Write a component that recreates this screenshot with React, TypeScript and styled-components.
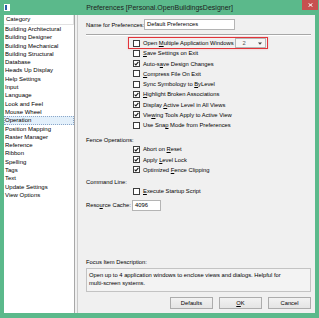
import styled, { createGlobalStyle } from "styled-components";
import { ReactNode } from "react";

const GlobalStyle = createGlobalStyle`
  html, body {
    margin: 0;
    padding: 0;
    background: #ffffff;
  }
  body {
    font-family: "Liberation Sans", Arial, sans-serif;
  }
`;

const Window = styled.div`
  width: 319px;
  height: 318px;
  background: #5bb98b;
  display: flex;
  flex-direction: column;
  overflow: hidden;
`;

const TitleBar = styled.div`
  height: 15px;
  flex: none;
  display: grid;
  grid-template-columns: 1fr auto 1fr;
  align-items: start;
`;

const AppIcon = styled.svg`
  margin: 4px 0 0 4px;
  justify-self: start;
`;

const Title = styled.div`
  font-size: 7px;
  line-height: 15px;
  color: #1e1e1e;
  white-space: nowrap;
`;

const CloseButton = styled.div`
  justify-self: end;
  width: 16px;
  height: 10px;
  margin-right: 1px;
  background: #c75050;
  display: flex;
  align-items: center;
  justify-content: center;
`;

const Frame = styled.div`
  flex: 1;
  margin: 0 4px 5px 4px;
  background: #f0f0f0;
  display: flex;
  min-height: 0;
`;

const CategoryList = styled.div`
  width: 71px;
  flex: none;
  box-sizing: border-box;
  background: #ffffff;
  border-right: 1px solid #a8a8a8;
  font-size: 6px;
  color: #000;
`;

const CategoryHeader = styled.div`
  height: 10px;
  box-sizing: border-box;
  line-height: 9px;
  padding-left: 2px;
  border-bottom: 1px solid #e2e2e2;
  border-right: 1px solid #e2e2e2;
`;

const CategoryItem = styled.div<{ $selected?: boolean }>`
  height: 8.3px;
  line-height: 8.3px;
  box-sizing: border-box;
  padding-left: ${(p) => (p.$selected ? "0" : "1px")};
  white-space: nowrap;
  background: ${(p) => (p.$selected ? "#e3f0fb" : "transparent")};
  border: ${(p) => (p.$selected ? "1px dotted #8aa6c8" : "none")};
  line-height: ${(p) => (p.$selected ? "6.3px" : "8.3px")};
`;

const Splitter = styled.div`
  width: 5px;
  flex: none;
  background: linear-gradient(
    to right,
    transparent 0,
    transparent 2.5px,
    #c9c9c9 2.5px,
    #c9c9c9 3.5px,
    transparent 3.5px
  );
`;

const Content = styled.div`
  flex: 1;
  display: flex;
  flex-direction: column;
  padding: 4px 4px 4px 6px;
  font-size: 5.8px;
  color: #000;
  min-width: 0;
`;

const FieldRow = styled.div`
  display: flex;
  align-items: center;
  height: 11px;
  flex: none;
`;

const FieldLabel = styled.span<{ $width: number }>`
  width: ${(p) => p.$width}px;
  white-space: nowrap;
`;

const TextInput = styled.div<{ $width: number }>`
  width: ${(p) => p.$width}px;
  height: 11px;
  box-sizing: border-box;
  background: #ffffff;
  border: 1px solid #b4b4b4;
  padding-left: 2px;
  line-height: 9px;
  white-space: nowrap;
`;

const Separator = styled.div`
  height: 2px;
  flex: none;
  margin-top: 4px;
  border-top: 1px solid #a7a7a7;
  border-bottom: 1px solid #ffffff;
  box-sizing: border-box;
`;

const OptionGroup = styled.div<{ $top: number }>`
  display: flex;
  flex-direction: column;
  flex: none;
  margin-top: ${(p) => p.$top}px;
`;

const CheckRow = styled.div`
  height: 10.25px;
  display: flex;
  align-items: center;
  padding-left: 47px;
  white-space: nowrap;
`;

const HighlightRow = styled(CheckRow)`
  margin-left: 42.5px;
  padding-left: 4.5px;
  padding-right: 1px;
  align-self: flex-start;
  outline: 1.5px solid #e3343a;
  outline-offset: 0;
  box-shadow: 0 0 2px 1px rgba(227, 52, 58, 0.25);
`;

const Box = styled.span`
  width: 7px;
  height: 7px;
  box-sizing: border-box;
  flex: none;
  border: 1px solid #3c3c3c;
  background: #ffffff;
  display: flex;
  align-items: center;
  justify-content: center;
`;

const CheckLabel = styled.span`
  margin-left: 3px;
`;

const ComboBox = styled.div`
  width: 31px;
  height: 10px;
  box-sizing: border-box;
  margin-left: 1px;
  border: 1px solid #b5b5b5;
  background: #f6f6f6;
  display: flex;
  align-items: center;
  justify-content: space-between;
  padding: 0 3px 0 7px;
  color: #555;
`;

const SectionLabel = styled.div<{ $top: number }>`
  height: 8px;
  line-height: 8px;
  flex: none;
  margin-top: ${(p) => p.$top}px;
`;

const Spacer = styled.div`
  flex: 1;
`;

const DescriptionBox = styled.div`
  height: 24px;
  flex: none;
  margin-top: 2px;
  box-sizing: border-box;
  border: 1px solid #c3c3c3;
  background: #f3f3f3;
  padding: 2px 2px 0 2px;
  line-height: 8px;
`;

const ButtonRow = styled.div`
  display: flex;
  justify-content: flex-end;
  gap: 6px;
  margin-top: 5px;
  flex: none;
`;

const Button = styled.div`
  width: 43px;
  height: 12px;
  box-sizing: border-box;
  border: 1px solid #acacac;
  background: linear-gradient(#f2f2f2, #e4e4e4);
  display: flex;
  align-items: center;
  justify-content: center;
`;

function Check({ checked }: { checked?: boolean }) {
  return (
    <Box>
      {checked && (
        <svg width="5" height="5" viewBox="0 0 5 5">
          <path d="M0.6 2.6 L1.9 3.9 L4.4 0.9" stroke="#1a1a1a" strokeWidth="1.1" fill="none" />
        </svg>
      )}
    </Box>
  );
}

const categories = [
  "Building Architectural",
  "Building Designer",
  "Building Mechanical",
  "Building Structural",
  "Database",
  "Heads Up Display",
  "Help Settings",
  "Input",
  "Language",
  "Look and Feel",
  "Mouse Wheel",
  "Operation",
  "Position Mapping",
  "Raster Manager",
  "Reference",
  "Ribbon",
  "Spelling",
  "Tags",
  "Text",
  "Update Settings",
  "View Options",
];

const mainOptions: { label: ReactNode; checked: boolean }[] = [
  { label: <><u>S</u>ave Settings on Exit</>, checked: false },
  { label: <>Auto-s<u>a</u>ve Design Changes</>, checked: true },
  { label: <><u>C</u>ompress File On Exit</>, checked: false },
  { label: <>Sync Symbology to <u>B</u>yLevel</>, checked: false },
  { label: <><u>H</u>ighlight Broken Associations</>, checked: true },
  { label: <>Display <u>A</u>ctive Level in All Views</>, checked: true },
  { label: <>Vie<u>w</u>ing Tools Apply to Active View</>, checked: true },
  { label: <>Use Sna<u>p</u> Mode from Preferences</>, checked: false },
];

const fenceOptions: { label: ReactNode; checked: boolean }[] = [
  { label: <>Abort on <u>R</u>eset</>, checked: true },
  { label: <>Apply <u>L</u>evel Lock</>, checked: true },
  { label: <>Optimized <u>F</u>ence Clipping</>, checked: true },
];

export default function App() {
  return (
    <>
      <GlobalStyle />
      <Window>
        <TitleBar>
          <AppIcon width="6" height="7" viewBox="0 0 6 7">
            <rect x="0" y="0" width="6" height="7" fill="#ffffff" />
            <rect x="1" y="1" width="2" height="5" fill="#2a5ea8" />
          </AppIcon>
          <Title>Preferences [Personal.OpenBuildingsDesigner]</Title>
          <CloseButton>
            <svg width="5" height="4" viewBox="0 0 5 4">
              <path d="M0.5 0.3 L4.5 3.7 M4.5 0.3 L0.5 3.7" stroke="#ffffff" strokeWidth="1" />
            </svg>
          </CloseButton>
        </TitleBar>
        <Frame>
          <CategoryList>
            <CategoryHeader>Category</CategoryHeader>
            {categories.map((c) => (
              <CategoryItem key={c} $selected={c === "Operation"}>
                {c}
              </CategoryItem>
            ))}
          </CategoryList>
          <Splitter />
          <Content>
            <FieldRow>
              <FieldLabel $width={58}>Name for Preferences:</FieldLabel>
              <TextInput $width={91}>Default Preferences</TextInput>
            </FieldRow>
            <Separator />
            <OptionGroup $top={1.9}>
              <HighlightRow>
                <Check />
                <CheckLabel>
                  Open <u>M</u>ultiple Application Windows
                </CheckLabel>
                <ComboBox>
                  <span>2</span>
                  <svg width="4" height="3" viewBox="0 0 4 3">
                    <path d="M0 0.5 L4 0.5 L2 2.7 Z" fill="#444" />
                  </svg>
                </ComboBox>
              </HighlightRow>
              {mainOptions.map((o, i) => (
                <CheckRow key={i}>
                  <Check checked={o.checked} />
                  <CheckLabel>{o.label}</CheckLabel>
                </CheckRow>
              ))}
            </OptionGroup>
            <SectionLabel $top={6}>Fence Operations:</SectionLabel>
            <OptionGroup $top={0}>
              {fenceOptions.map((o, i) => (
                <CheckRow key={i}>
                  <Check checked={o.checked} />
                  <CheckLabel>{o.label}</CheckLabel>
                </CheckRow>
              ))}
            </OptionGroup>
            <SectionLabel $top={3}>Command Line:</SectionLabel>
            <OptionGroup $top={0}>
              <CheckRow>
                <Check />
                <CheckLabel>
                  <u>E</u>xecute Startup Script
                </CheckLabel>
              </CheckRow>
            </OptionGroup>
            <FieldRow style={{ marginTop: 3.5 }}>
              <FieldLabel $width={46}>
                Reso<u>u</u>rce Cache:
              </FieldLabel>
              <TextInput $width={29}>4096</TextInput>
            </FieldRow>
            <Spacer />
            <SectionLabel $top={0}>Focus Item Description:</SectionLabel>
            <DescriptionBox>
              Open up to 4 application windows to enclose views and dialogs. Helpful for
              <br />
              multi-screen systems.
            </DescriptionBox>
            <ButtonRow>
              <Button>Defaults</Button>
              <Button>
                <u>O</u>K
              </Button>
              <Button>Cancel</Button>
            </ButtonRow>
          </Content>
        </Frame>
      </Window>
    </>
  );
}
